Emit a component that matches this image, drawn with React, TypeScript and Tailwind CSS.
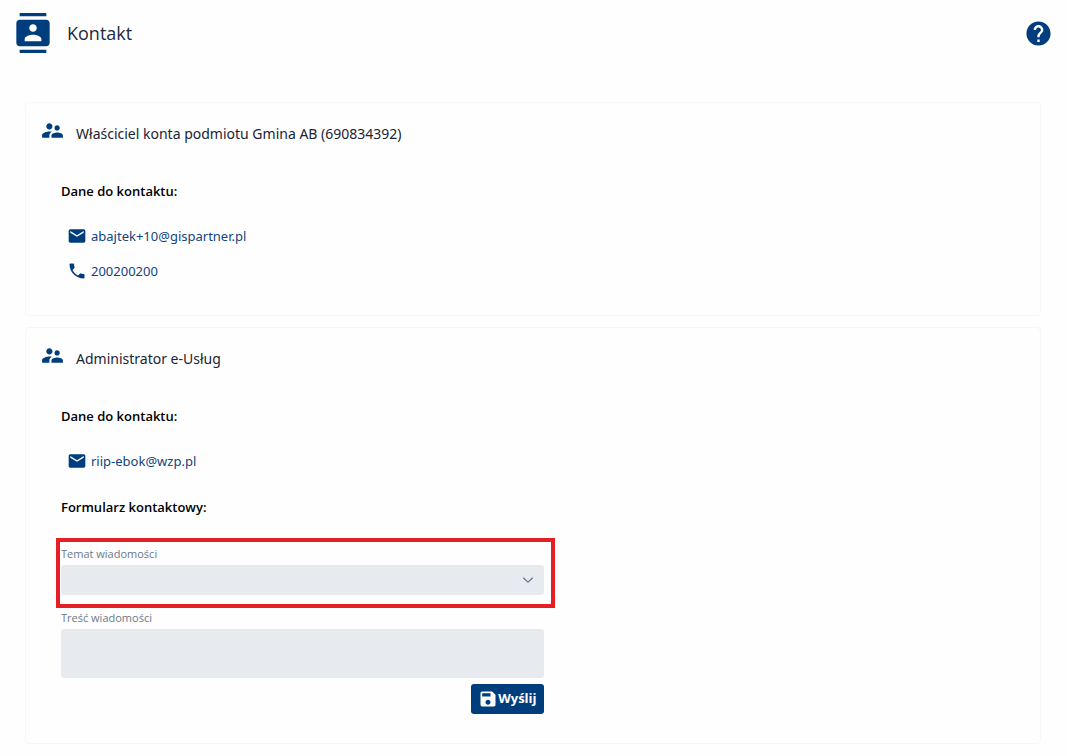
import type { ReactNode } from "react";
import {
  MdContacts,
  MdEmail,
  MdHelp,
  MdPhone,
  MdSave,
  MdSupervisorAccount,
} from "react-icons/md";

function Card({ title, children }: { title: string; children: ReactNode }) {
  return (
    <section className="rounded-sm border border-[#f7f7f8] px-[14px] pt-[15px] pb-[29px]">
      <header className="flex items-start gap-[11px]">
        <MdSupervisorAccount size={25} className="shrink-0 text-[#003d7c]" aria-hidden="true" />
        <h2 className="pt-1 font-['Noto_Sans',sans-serif] text-sm leading-6 text-[#1a2435]">
          {title}
        </h2>
      </header>
      <div className="pt-[35px] pl-[21px]">{children}</div>
    </section>
  );
}

function Heading({ children }: { children: ReactNode }) {
  return <h3 className="text-[13px] leading-5 font-semibold text-black">{children}</h3>;
}

function ContactLink({ href, icon, children }: { href: string; icon: ReactNode; children: ReactNode }) {
  return (
    <a
      href={href}
      className="flex items-center gap-1 font-['Noto_Sans',sans-serif] text-[13px] leading-5 text-[#0f4580]"
    >
      <span className="text-[#003d7c]">{icon}</span>
      {children}
    </a>
  );
}

export default function App() {
  return (
    <div className="min-h-screen bg-[#fefefe] pb-3 font-['Open_Sans',sans-serif]">
      <header className="flex items-center justify-between pt-[13px] pr-[14px] pl-[13px]">
        <div className="flex items-center gap-[14px]">
          <MdContacts size={40} className="text-[#003d7c]" aria-hidden="true" />
          <h1 className="text-lg leading-7 text-[#212b3c]">Kontakt</h1>
        </div>
        <button type="button" aria-label="Pomoc" className="text-[#003d7c]">
          <MdHelp size={29} />
        </button>
      </header>

      <main className="flex flex-col gap-[11px] pt-[49px] pr-[26px] pl-[25px]">
        <Card title="Właściciel konta podmiotu Gmina AB (690834392)">
          <Heading>Dane do kontaktu:</Heading>
          <div className="flex flex-col items-start gap-[15px] pt-[25px] pb-[5px] pl-[6px]">
            <ContactLink href="mailto:abajtek+10@gispartner.pl" icon={<MdEmail size={20} />}>
              abajtek+10@gispartner.pl
            </ContactLink>
            <ContactLink href="tel:200200200" icon={<MdPhone size={20} />}>
              200200200
            </ContactLink>
          </div>
        </Card>

        <Card title="Administrator e-Usług">
          <Heading>Dane do kontaktu:</Heading>
          <div className="flex flex-col items-start pt-[25px] pb-[26px] pl-[6px]">
            <ContactLink href="mailto:riip-ebok@wzp.pl" icon={<MdEmail size={20} />}>
              riip-ebok@wzp.pl
            </ContactLink>
          </div>
          <Heading>Formularz kontaktowy:</Heading>
          <form className="flex w-1/2 flex-col pt-[27px]" onSubmit={(e) => e.preventDefault()}>
            <div className="relative">
              <div className="pointer-events-none absolute -top-[6px] -right-[11px] -bottom-[13px] -left-[5px] border-4 border-[#e61e25]" />
              <label htmlFor="subject" className="block text-[11px] leading-5 text-[#6c788a]">
                Temat wiadomości
              </label>
              <div className="mt-px grid items-center">
                <select
                  id="subject"
                  defaultValue=""
                  className="col-start-1 row-start-1 h-[30px] w-full appearance-none rounded-[3px] bg-[#e7eaee] px-3 text-[13px] text-[#212b3c]"
                >
                  <option value="" />
                </select>
                <svg
                  viewBox="0 0 12 8"
                  className="pointer-events-none col-start-1 row-start-1 mr-[10px] h-2 w-3 justify-self-end"
                  fill="none"
                  stroke="#6c788a"
                  strokeWidth="1.3"
                  aria-hidden="true"
                >
                  <path d="M1.3 1.8 6 6.2l4.7-4.4" />
                </svg>
              </div>
            </div>
            <label htmlFor="message" className="mt-[13px] block text-[11px] leading-5 text-[#6c788a]">
              Treść wiadomości
            </label>
            <textarea
              id="message"
              className="mt-px h-[49px] w-full resize-none rounded-[3px] bg-[#e7eaee] px-3 py-2 text-[13px] text-[#212b3c]"
            />
            <button
              type="submit"
              className="mt-[6px] flex h-[30px] items-center self-end rounded-[3px] bg-[#003d7c] px-[7px] text-[13px] font-bold text-white"
            >
              <MdSave size={20} aria-hidden="true" />
              Wyślij
            </button>
          </form>
        </Card>
      </main>
    </div>
  );
}
